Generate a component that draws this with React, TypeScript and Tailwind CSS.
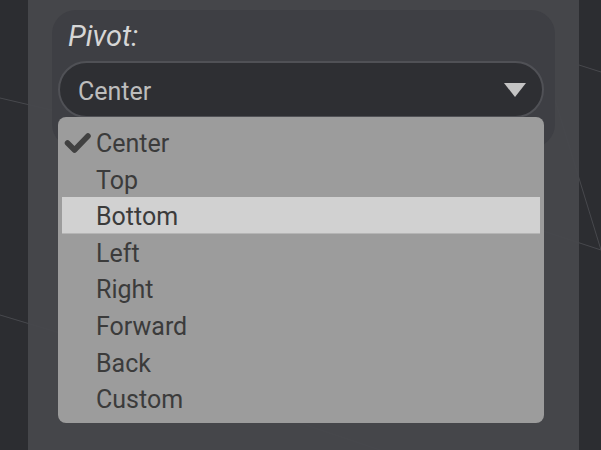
import React from "react";

const items = ["Center", "Top", "Bottom", "Left", "Right", "Forward", "Back", "Custom"];

export default function App() {
  return (
    <div
      className="relative w-[601px] h-[450px] overflow-hidden bg-[#2c2d31]"
      style={{ fontFamily: "Roboto, 'Noto Sans', sans-serif" }}
    >
      <svg className="absolute inset-0 pointer-events-none" width="601" height="450">
        <g stroke="#5a5b60" strokeWidth="1" opacity="0.6">
          <line x1="0" y1="98" x2="60" y2="112" />
          <line x1="0" y1="315" x2="70" y2="336" />
          <line x1="579" y1="65" x2="601" y2="72" />
          <line x1="555" y1="100" x2="601" y2="250" />
          <line x1="540" y1="230" x2="601" y2="250" />
          <line x1="300" y1="423" x2="380" y2="450" />
        </g>
      </svg>
      <div className="relative ml-[28px] w-[551px] h-full bg-[#47484c]/95">
        <div className="absolute left-[24px] top-[10px] w-[503px] h-[138px] rounded-[24px] bg-[#3e3f44]">
          <div className="pl-[16px] pt-[8px] h-[51px] text-[29px] leading-[36px] italic text-[#d6d6d6]">
            Pivot:
          </div>
          <div className="ml-[6px] w-[486px] h-[57px] rounded-full border-2 border-[#505156] bg-[#2e2f33] flex items-center justify-between pl-[18px] pr-[16px]">
            <span className="mt-[5px] text-[25px] text-[#bdbdbd]">Center</span>
            <svg width="22" height="14" viewBox="0 0 22 14">
              <polygon points="0,0 22,0 11,14" fill="#c4c4c4" />
            </svg>
          </div>
        </div>
        <div className="absolute left-[30px] top-[117px] w-[486px] h-[306px] rounded-[8px] bg-[#9c9c9c] pt-[7px] px-[4px] text-[25px] text-[#3b3b3b]">
          {items.map((it, i) => (
            <div
              key={it}
              className={
                i === 2
                  ? "relative h-[36.6px] pt-[4px] leading-[32.6px] pl-[34px] bg-[#d1d1d1] border-b border-[#b5b5b5]"
                  : "relative h-[36.6px] pt-[4px] leading-[32.6px] pl-[34px]"
              }
            >
              {i === 0 && (
                <svg className="absolute left-[2px] top-[8px]" width="28" height="22" viewBox="0 0 28 22">
                  <polyline
                    points="3.5,11 10.5,18 24,4"
                    fill="none"
                    stroke="#414141"
                    strokeWidth="5.5"
                    strokeLinecap="round"
                    strokeLinejoin="round"
                  />
                </svg>
              )}
              {it}
            </div>
          ))}
        </div>
      </div>
    </div>
  );
}
